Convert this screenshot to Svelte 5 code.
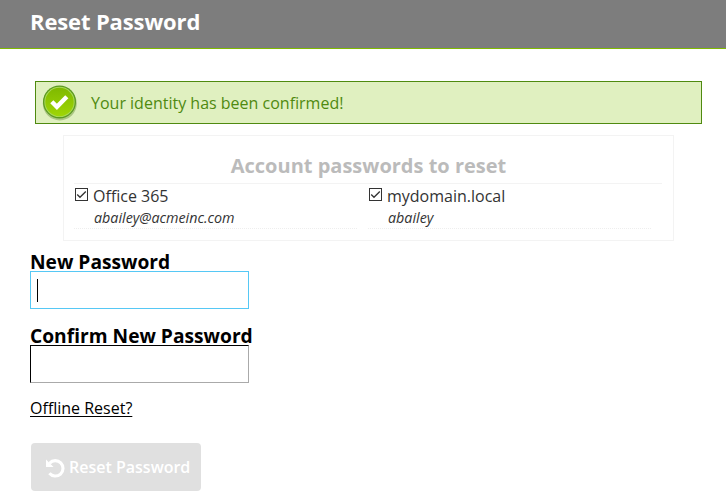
<script>
  const accounts = [
    { name: 'Office 365', user: 'abailey@acmeinc.com' },
    { name: 'mydomain.local', user: 'abailey' }
  ];
</script>

<div class="page">
  <header><h1>Reset Password</h1></header>
  <main>
    <div class="alert">
      <svg width="36" height="36" viewBox="0 0 36 36">
        <defs>
          <linearGradient id="ball" x1="0" y1="0" x2="0" y2="1">
            <stop offset="0" stop-color="#7fb900" />
            <stop offset="1" stop-color="#9fd606" />
          </linearGradient>
        </defs>
        <circle cx="17.8" cy="18.4" r="17" fill="#4a7a10" opacity=".35" />
        <circle cx="17.5" cy="16.9" r="16.5" fill="#5c9a20" />
        <circle cx="17.5" cy="16.9" r="15.2" fill="#a9d958" />
        <circle cx="17.5" cy="17" r="14.2" fill="url(#ball)" />
        <path d="M9.8 16.8l5.1 5.1 9.9-10.2" fill="none" stroke="#fff" stroke-width="4.4" />
      </svg>
      <span class="message">Your identity has been confirmed!</span>
    </div>

    <section class="panel">
      <h2><span>Account passwords to reset</span></h2>
      <div class="accounts">
        {#each accounts as account}
          <div class="account">
            <div class="name">
              <svg width="13" height="13" viewBox="0 0 13 13">
                <rect x=".5" y=".5" width="12" height="12" fill="#fff" stroke="#333" />
                <path d="M2.2 6.5l2.8 2.8 5.8-5.8" fill="none" stroke="#333" stroke-width="1.3" />
              </svg>
              <span>{account.name}</span>
            </div>
            <div class="user"><span>{account.user}</span></div>
          </div>
        {/each}
      </div>
    </section>

    <div class="field">
      <label for="new-password">New Password</label>
      <div class="input focused" id="new-password"><i class="caret"></i></div>
    </div>
    <div class="field">
      <label for="confirm-password">Confirm New Password</label>
      <div class="input" id="confirm-password"></div>
    </div>

    <a class="offline" href="#offline">Offline Reset?</a>

    <button>
      <svg width="19" height="20" viewBox="0 0 19 20">
        <path d="M3.6 4.2A7.7 7.7 0 1 1 3.4 14.3" fill="none" stroke="#fff" stroke-width="3.1" />
        <path d="M0 .4V8h7.6z" fill="#fff" />
      </svg>
      <span>Reset Password</span>
    </button>
  </main>
</div>

<style>
  :global(body) { background: #fff; overflow: hidden; }
  .page {
    height: 502px;
    font-family: "Open Sans", "Noto Sans", sans-serif;
    font-size: 16px;
    color: #000;
  }
  * { box-sizing: border-box; }
  header {
    height: 49px;
    padding: 6px 30px;
    background: #7d7d7d;
    border-bottom: 1px solid #7fb900;
  }
  h1 { margin: 0; font-size: 22px; line-height: 30px; font-weight: 700; letter-spacing: -.13px; color: #fff; }
  main { display: flex; flex-direction: column; align-items: flex-start; padding: 32px 24px 0 30px; }
  .alert {
    display: flex;
    align-self: stretch;
    height: 43px;
    margin-left: 5px;
    padding: 3px 6px;
    gap: 13px;
    background: #e0f0c0;
    border: 1px solid #4f8a10;
    color: #4f8a10;
  }
  .alert svg { flex: none; }
  .message { line-height: 36px; }
  .panel {
    width: 611px;
    height: 106px;
    margin: 11px 0 0 33px;
    padding: 15px 11px 0 10px;
    border: 1px solid #f3f3f3;
  }
  h2 {
    height: 33px;
    margin: 0;
    padding-left: 1px;
    border-bottom: 1px solid #f3f3f3;
    font-size: 20px;
    line-height: 30px;
    font-weight: 700;
    text-align: center;
    color: #bbb;
  }
  .accounts { display: flex; gap: 11px; }
  .account { flex: none; width: 283px; height: 45px; border-bottom: 1px dotted #eee; color: #333; }
  .name { display: flex; gap: 5px; line-height: 24px; padding-left: 1px; }
  .name svg { margin-top: 4px; }
  .user { padding-left: 20px; font-size: 14.3px; line-height: 20px; font-style: italic; }
  .field { display: flex; flex-direction: column; align-items: flex-start; height: 74px; }
  .panel + .field { margin-top: 9px; }
  label { height: 21px; font-size: 19.2px; line-height: 23px; font-weight: 700; white-space: nowrap; }
  .input {
    width: 219px;
    height: 38px;
    padding: 7px 6px;
    background: #fff;
    border: 1px solid #aaa;
    border-top-color: #000;
    border-left-color: #000;
  }
  .input.focused { border-color: #56c8f5; }
  .caret { display: block; width: 1px; height: 23px; background: #000; }
  .offline { margin-top: -2px; color: #000; line-height: 24px; text-decoration-thickness: 1px; text-underline-offset: 2px; }
  button {
    display: flex;
    align-items: center;
    width: 170px;
    height: 48px;
    margin: 23px 0 0 1px;
    padding: 0 0 0 15px;
    gap: 4px;
    border: 0;
    border-radius: 4px;
    background: #e0e0e0;
    color: #fff;
    font: 600 16px "Open Sans", "Noto Sans", sans-serif;
    white-space: nowrap;
  }
  button svg { margin-top: 4px; }
</style>
